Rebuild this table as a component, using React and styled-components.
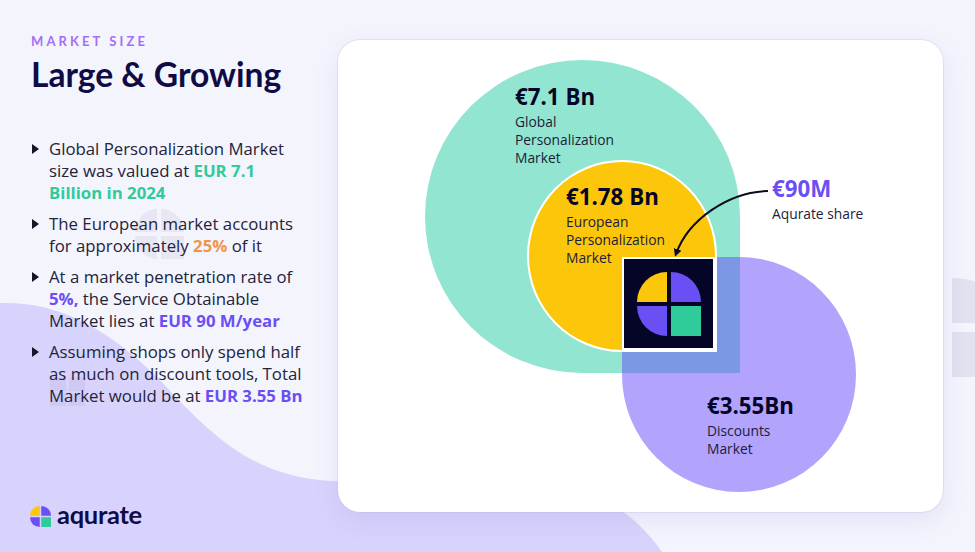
import React from "react";
import styled, { createGlobalStyle } from "styled-components";

const GlobalStyle = createGlobalStyle`
  html, body {
    margin: 0;
    padding: 0;
    background: #f4f4fd;
  }
  * {
    box-sizing: border-box;
  }
`;

const colors = {
  navy: "#0e0b45",
  text: "#23233a",
  purple: "#6a4ff4",
  label: "#a46ff6",
  green: "#2fcb9b",
  orange: "#f1954c",
  mint: "#92e6d1",
  yellow: "#fcc60b",
  lilac: "#b2a3fc",
  overlap: "#7c97e4",
  ink: "#050527",
};

const Page = styled.div`
  position: relative;
  width: 975px;
  height: 552px;
  overflow: hidden;
  display: flex;
  align-items: flex-start;
  background: #f4f4fd;
  font-family: "Open Sans", "Liberation Sans", sans-serif;
`;

const Backdrop = styled.svg`
  position: absolute;
  left: 0;
  top: 0;
  width: 975px;
  height: 552px;
  pointer-events: none;
`;

const Side = styled.aside`
  position: relative;
  width: 338px;
  height: 552px;
  padding: 33px 0 0 31px;
  display: flex;
  flex-direction: column;
`;

const Eyebrow = styled.div`
  font-family: Lato, "Liberation Sans", sans-serif;
  font-weight: 700;
  font-size: 13px;
  letter-spacing: 3.1px;
  color: ${colors.label};
  line-height: 16px;
`;

const Title = styled.h1`
  margin: 5px 0 0;
  font-family: Lato, "Liberation Sans", sans-serif;
  font-weight: 700;
  font-size: 33.6px;
  line-height: 40px;
  color: ${colors.navy};
`;

const List = styled.ul`
  list-style: none;
  margin: 44px 0 0;
  padding: 0;
  display: flex;
  flex-direction: column;
  gap: 9px;
  width: 278px;
`;

const Item = styled.li`
  position: relative;
  padding-left: 18px;
  font-size: 16.8px;
  line-height: 22px;
  color: ${colors.text};

  &::before {
    content: "";
    position: absolute;
    left: 1px;
    top: 6px;
    border-style: solid;
    border-width: 5px 0 5px 7px;
    border-color: transparent transparent transparent #15152a;
  }
`;

const Mark = styled.b`
  font-weight: 700;
  color: ${(p) => colors[p.$tone]};
`;

const Brand = styled.div`
  margin-top: auto;
  margin-bottom: 22px;
  display: flex;
  align-items: center;
  gap: 6px;
  margin-left: -1px;
`;

const BrandName = styled.span`
  font-family: Lato, "Liberation Sans", sans-serif;
  font-weight: 700;
  font-size: 25.5px;
  letter-spacing: -0.3px;
  line-height: 24px;
  color: ${colors.navy};
  padding-bottom: 4px;
`;

const Card = styled.section`
  position: relative;
  margin-top: 40px;
  width: 605px;
  height: 472px;
  background: #fff;
  border-radius: 22px;
  box-shadow: 0 8px 24px rgba(120, 110, 200, 0.14), 0 0 0 1px rgba(200, 200, 230, 0.35);
`;

const Shape = styled.div`
  position: absolute;
  left: ${(p) => p.$x}px;
  top: ${(p) => p.$y}px;
  width: ${(p) => p.$w}px;
  height: ${(p) => p.$h}px;
  background: ${(p) => p.$bg};
  border-radius: ${(p) => p.$radius || "0"};
  border: ${(p) => (p.$ring ? "2px solid #fff" : "none")};
`;

const Tile = styled(Shape)`
  display: flex;
  align-items: center;
  justify-content: center;
`;

const Figure = styled.div`
  position: absolute;
  left: ${(p) => p.$x}px;
  top: ${(p) => p.$y}px;
  color: ${colors.ink};
`;

const Amount = styled.div`
  font-weight: 700;
  font-size: 22.3px;
  line-height: 26px;
  color: ${(p) => p.$color || colors.ink};
`;

const Caption = styled.div`
  margin-top: 3px;
  font-size: 13.8px;
  line-height: 18px;
  color: #1c1c3a;
`;

const Arrow = styled.svg`
  position: absolute;
  left: 320px;
  top: 140px;
  overflow: visible;
`;

const LogoMark = ({ size = 20, gap = 2, colorsSet }) => {
  const h = (size - gap) / 2;
  const o = h + gap;
  const [tl, tr, bl, br] = colorsSet;
  return (
    <svg width={size} height={size} viewBox={`0 0 ${size} ${size}`}>
      <path d={`M0 ${h} A${h} ${h} 0 0 1 ${h} 0 L${h} ${h} Z`} fill={tl} />
      <path d={`M${o} 0 A${h} ${h} 0 0 1 ${size} ${h} L${o} ${h} Z`} fill={tr} />
      <path d={`M0 ${o} L${h} ${o} L${h} ${size} A${h} ${h} 0 0 1 0 ${o} Z`} fill={bl} />
      <rect x={o} y={o} width={h} height={h} fill={br} />
    </svg>
  );
};

const bullets = [
  [
    "Global Personalization Market size was valued at ",
    { tone: "green", text: "EUR 7.1 Billion in 2024" },
  ],
  [
    "The European market accounts for approximately ",
    { tone: "orange", text: "25%" },
    " of it",
  ],
  [
    "At a market penetration rate of ",
    { tone: "purple", text: "5%," },
    " the Service Obtainable Market lies at ",
    { tone: "purple", text: "EUR 90 M/year" },
  ],
  [
    "Assuming shops only spend half as much on discount tools, Total Market would be at ",
    { tone: "purple", text: "EUR 3.55 Bn" },
  ],
];

const brandColors = ["#fcc60b", "#6a4ff4", "#6a4ff4", "#2fcb9b"];

export default function App() {
  return (
    <>
      <GlobalStyle />
      <Page>
        <Backdrop viewBox="0 0 975 552">
          <path
            d="M0 303 C55 301 105 325 160 380 C215 440 255 476 330 481 L560 486 C605 492 640 520 662 552 L0 552 Z"
            fill="#d8d3fc"
          />
          <g fill="#e7e6f2">
            <path d="M135 232 A23 23 0 0 1 157 209 L157 232 Z" />
            <path d="M161 209 A23 23 0 0 1 184 232 L161 232 Z" />
            <path d="M135 236 L157 236 L157 259 A23 23 0 0 1 135 236 Z" />
            <rect x="161" y="236" width="23" height="23" />
          </g>
          <g fill="#cdc7f2" opacity="0.8">
            <rect x="50" y="377" width="16" height="14" />
            <rect x="69" y="377" width="16" height="14" />
            <rect x="50" y="394" width="16" height="12" />
            <rect x="69" y="394" width="16" height="12" />
          </g>
          <g fill="#e2e1f0">
            <path d="M952 323 L952 278 C990 278 1000 300 1000 323 Z" />
            <rect x="952" y="332" width="40" height="45" />
          </g>
        </Backdrop>

        <Side>
          <Eyebrow>MARKET SIZE</Eyebrow>
          <Title>Large &amp; Growing</Title>
          <List>
            {bullets.map((parts, i) => (
              <Item key={i}>
                {parts.map((part, j) =>
                  typeof part === "string" ? (
                    <React.Fragment key={j}>{part}</React.Fragment>
                  ) : (
                    <Mark key={j} $tone={part.tone}>
                      {part.text}
                    </Mark>
                  )
                )}
              </Item>
            ))}
          </List>
          <Brand>
            <LogoMark size={21} gap={1.5} colorsSet={brandColors} />
            <BrandName>aqurate</BrandName>
          </Brand>
        </Side>

        <Card>
          <Shape $x={87} $y={20} $w={315} $h={313} $bg={colors.mint} $radius="50% 50% 0 50%" />
          <Shape $x={284} $y={217} $w={234} $h={235} $bg={colors.lilac} $radius="0 50% 50% 50%" />
          <Shape $x={284} $y={217} $w={118} $h={116} $bg={colors.overlap} />
          <Shape $x={189} $y={120} $w={190} $h={192} $bg={colors.yellow} $radius="50% 50% 0 50%" $ring />
          <Tile $x={284} $y={217} $w={93} $h={93} $bg={colors.ink} $ring>
            <LogoMark size={64} gap={4} colorsSet={brandColors} />
          </Tile>

          <Figure $x={177} $y={44}>
            <Amount>€7.1 Bn</Amount>
            <Caption>
              Global
              <br />
              Personalization
              <br />
              Market
            </Caption>
          </Figure>

          <Figure $x={228} $y={144}>
            <Amount>€1.78 Bn</Amount>
            <Caption>
              European
              <br />
              Personalization
              <br />
              Market
            </Caption>
          </Figure>

          <Figure $x={434} $y={136}>
            <Amount $color={colors.purple}>€90M</Amount>
            <Caption>Aqurate share</Caption>
          </Figure>

          <Figure $x={369} $y={353}>
            <Amount>€3.55Bn</Amount>
            <Caption>
              Discounts
              <br />
              Market
            </Caption>
          </Figure>

          <Arrow width="120" height="90">
            <defs>
              <marker id="head" markerWidth="8" markerHeight="8" refX="5" refY="4" orient="auto" markerUnits="userSpaceOnUse">
                <path d="M0 0 L8 4 L0 8 Z" fill="#0b0b1e" />
              </marker>
            </defs>
            <path
              d="M110 11 C70 12 30 40 18 74"
              fill="none"
              stroke="#0b0b1e"
              strokeWidth="2"
              markerEnd="url(#head)"
            />
          </Arrow>
        </Card>
      </Page>
    </>
  );
}
